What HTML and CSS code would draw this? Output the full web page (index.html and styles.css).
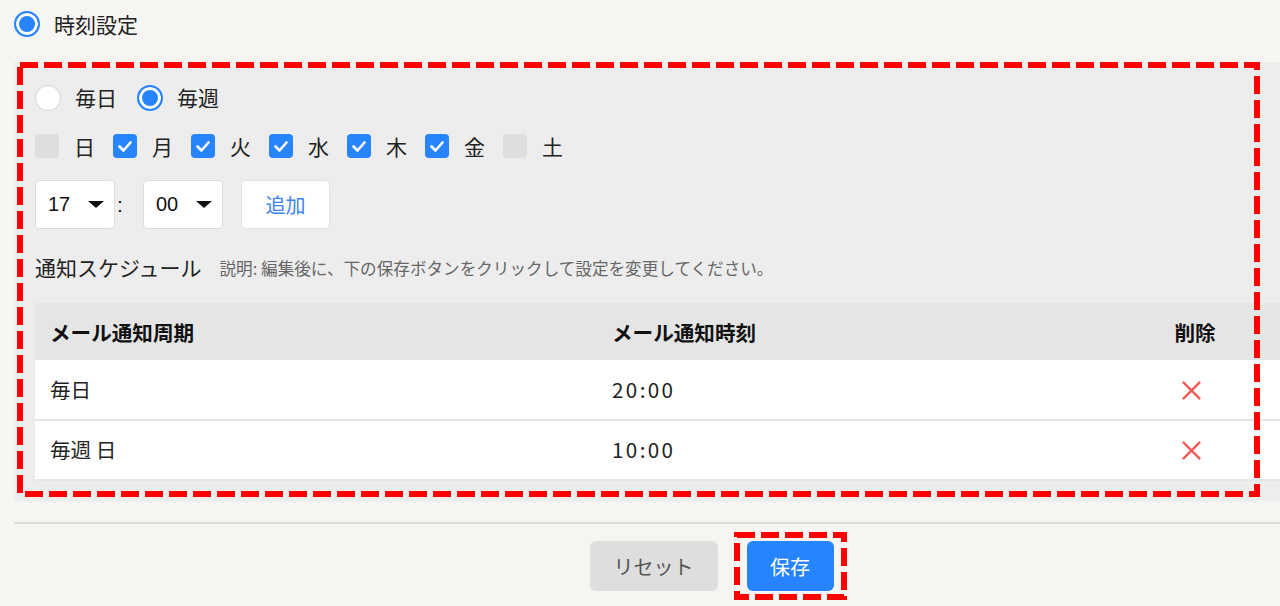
FILE: index.html
```html
<!DOCTYPE html>
<html lang="ja">
<head>
<meta charset="utf-8">
<title>時刻設定</title>
<link rel="stylesheet" href="styles.css">
</head>
<body>
<div class="page">
  <div class="mode-row">
    <span class="radio on"></span>
    <span class="mode-label">時刻設定</span>
  </div>

  <section class="panel">
    <div class="freq-row">
      <label class="opt"><span class="radio"></span><span class="opt-label">毎日</span></label>
      <label class="opt"><span class="radio on"></span><span class="opt-label">毎週</span></label>
    </div>

    <div class="days">
      <label class="day"><span class="cb"></span><span class="day-label">日</span></label>
      <label class="day"><span class="cb on"><svg viewBox="0 0 24 24"><polyline points="6.5,12.5 10.5,16.5 17.5,8.5"/></svg></span><span class="day-label">月</span></label>
      <label class="day"><span class="cb on"><svg viewBox="0 0 24 24"><polyline points="6.5,12.5 10.5,16.5 17.5,8.5"/></svg></span><span class="day-label">火</span></label>
      <label class="day"><span class="cb on"><svg viewBox="0 0 24 24"><polyline points="6.5,12.5 10.5,16.5 17.5,8.5"/></svg></span><span class="day-label">水</span></label>
      <label class="day"><span class="cb on"><svg viewBox="0 0 24 24"><polyline points="6.5,12.5 10.5,16.5 17.5,8.5"/></svg></span><span class="day-label">木</span></label>
      <label class="day"><span class="cb on"><svg viewBox="0 0 24 24"><polyline points="6.5,12.5 10.5,16.5 17.5,8.5"/></svg></span><span class="day-label">金</span></label>
      <label class="day"><span class="cb"></span><span class="day-label">土</span></label>
    </div>

    <div class="time-row">
      <div class="select"><span class="select-val">17</span><span class="caret"></span></div>
      <span class="colon">:</span>
      <div class="select"><span class="select-val">00</span><span class="caret"></span></div>
      <button class="add-btn">追加</button>
    </div>

    <div class="sched-head">
      <h2 class="sched-title">通知スケジュール</h2>
      <span class="note">説明: 編集後に、下の保存ボタンをクリックして設定を変更してください。</span>
    </div>

    <table class="sched">
      <thead>
        <tr><th class="c1">メール通知周期</th><th class="c2">メール通知時刻</th><th class="c3">削除</th></tr>
      </thead>
      <tbody>
        <tr>
          <td class="c1">毎日</td>
          <td class="c2 time">20:00</td>
          <td class="c3"><svg class="del" viewBox="0 0 22 22"><line x1="2" y1="2" x2="20" y2="20"/><line x1="20" y1="2" x2="2" y2="20"/></svg></td>
        </tr>
        <tr>
          <td class="c1">毎週 日</td>
          <td class="c2 time">10:00</td>
          <td class="c3"><svg class="del" viewBox="0 0 22 22"><line x1="2" y1="2" x2="20" y2="20"/><line x1="20" y1="2" x2="2" y2="20"/></svg></td>
        </tr>
      </tbody>
    </table>

    <svg class="annot panel-annot" viewBox="0 0 1243 435"><rect x="3" y="3" width="1237" height="429" /></svg>
  </section>

  <div class="divider"></div>

  <div class="footer">
    <button class="btn reset">リセット</button>
    <span class="save-wrap">
      <button class="btn save">保存</button>
      <svg class="annot save-annot" viewBox="0 0 113 68"><rect x="3" y="3" width="107" height="62" /></svg>
    </span>
  </div>
</div>
</body>
</html>
```

FILE: styles.css
```css
* { box-sizing: border-box; }

html, body {
  margin: 0;
  padding: 0;
  background: #f6f5f2;
  overflow: hidden;
}

body {
  font-family: "Noto Sans CJK JP", "Noto Sans", sans-serif;
  color: #222;
  width: 1280px;
  height: 606px;
}

.page {
  padding: 11px 0 0 14px;
}

/* radios */
.radio {
  display: inline-block;
  width: 26px;
  height: 26px;
  border-radius: 50%;
  background: #fff;
  border: 1px solid #d6d6d6;
  flex: none;
}
.radio.on {
  border: 2px solid #2684ff;
  background: #2684ff;
  box-shadow: inset 0 0 0 3px #fff;
}

.mode-row {
  display: flex;
  align-items: center;
  height: 26px;
  gap: 14px;
}
.mode-label {
  font-size: 21px;
  line-height: 26px;
}

/* panel */
.panel {
  position: relative;
  margin-top: 25px;
  background: #ededed;
  padding: 22px 0 20px 21px;
}

.freq-row {
  display: flex;
  align-items: center;
  height: 27px;
  gap: 20px;
}
.opt {
  display: flex;
  align-items: center;
  gap: 14px;
}
.opt-label {
  font-size: 21px;
  line-height: 27px;
}

.days {
  display: flex;
  align-items: center;
  margin-top: 23px;
  height: 24px;
}
.day {
  display: flex;
  align-items: center;
  gap: 15px;
  width: 78px;
}
.cb {
  width: 24px;
  height: 24px;
  border-radius: 4px;
  background: #dedede;
  flex: none;
  display: flex;
}
.cb.on { background: #2684ff; }
.cb svg { width: 24px; height: 24px; }
.cb polyline {
  fill: none;
  stroke: #fff;
  stroke-width: 2.6;
  stroke-linecap: round;
  stroke-linejoin: round;
}
.day-label {
  font-size: 21px;
  line-height: 24px;
}

.time-row {
  display: flex;
  align-items: center;
  margin-top: 22px;
  height: 49px;
}
.select {
  width: 80px;
  height: 49px;
  background: #fff;
  border: 1px solid #dcdcdc;
  border-radius: 4px;
  display: flex;
  align-items: center;
  justify-content: space-between;
  padding: 0 10px 0 12px;
}
.select-val {
  font-family: "Liberation Sans", Arial, sans-serif;
  font-size: 20px;
  color: #111;
}
.caret {
  width: 0;
  height: 0;
  border-left: 8px solid transparent;
  border-right: 8px solid transparent;
  border-top: 7px solid #111;
}
.colon {
  width: 28px;
  padding-left: 2px;
  font-family: "Liberation Sans", Arial, sans-serif;
  font-size: 21px;
  color: #111;
}
.add-btn {
  margin-left: 18px;
  width: 89px;
  height: 49px;
  background: #fff;
  border: 1px solid #e2e2e2;
  border-radius: 5px;
  font-family: inherit;
  font-size: 20px;
  color: #3d85f5;
  padding: 0;
}

.sched-head {
  display: flex;
  align-items: center;
  margin-top: 23px;
  height: 30px;
  gap: 18px;
}
.sched-title {
  margin: 0;
  font-size: 21px;
  font-weight: 400;
  line-height: 30px;
}
.note {
  font-size: 16.6px;
  color: #666;
  line-height: 30px;
  padding-top: 1px;
}

/* table */
.sched {
  margin-top: 21px;
  width: 100%;
  border-collapse: collapse;
  table-layout: fixed;
}
.sched th {
  height: 57px;
  background: #e5e5e5;
  font-size: 20.6px;
  font-weight: 700;
  color: #111;
  text-align: left;
  padding: 0 0 0 15px;
}
.sched td {
  height: 60px;
  background: #fff;
  border-bottom: 2px solid #e6e6e6;
  font-size: 20.6px;
  padding: 0 0 2px 15px;
}
.sched .c1 { width: 562px; }
.sched .c3 {
  width: 170px;
  text-align: center;
  padding-left: 0;
}
.time {
  letter-spacing: 2.4px;
}
.del {
  width: 21px;
  height: 21px;
  vertical-align: middle;
  margin-left: -8px;
  margin-top: -3px;
}
.del line {
  stroke: #f45a55;
  stroke-width: 2.4;
}

/* annotations */
.annot {
  position: absolute;
  pointer-events: none;
}
.annot rect {
  fill: none;
  stroke: #ff0000;
  stroke-width: 6;
  stroke-dasharray: 18 6;
}
.panel-annot {
  left: 3px;
  top: 0;
  width: 1243px;
  height: 435px;
}

.divider {
  margin-top: 21px;
  height: 2px;
  background: #dcdbd8;
}

.footer {
  display: flex;
  justify-content: center;
  gap: 29px;
  padding-left: 129px;
  margin-top: 17px;
}
.btn {
  height: 50px;
  border: none;
  border-radius: 6px;
  font-family: inherit;
  font-size: 20px;
  padding: 0;
}
.reset {
  width: 128px;
  background: #dedede;
  color: #555;
}
.save-wrap {
  position: relative;
  display: flex;
}
.save {
  width: 87px;
  background: #2684ff;
  color: #fff;
}
.save-annot {
  left: -13px;
  top: -9px;
  width: 113px;
  height: 68px;
}
```
